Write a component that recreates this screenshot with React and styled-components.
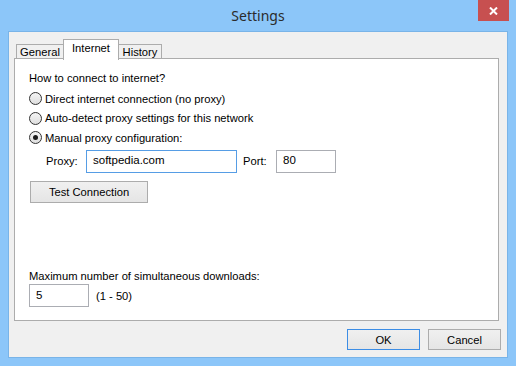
import React from "react"
import styled, { createGlobalStyle } from "styled-components"

const GlobalStyle = createGlobalStyle`
  html, body {
    margin: 0;
    padding: 0;
    background: #8cc6f9;
  }
  * {
    box-sizing: border-box;
  }
`

const Frame = styled.div`
  width: 516px;
  height: 366px;
  background: #8cc6f9;
  display: flex;
  flex-direction: column;
  font-family: "Liberation Sans", "Noto Sans", sans-serif;
  font-size: 11.2px;
  color: #000;
`

const TitleBar = styled.div`
  position: relative;
  height: 31px;
  display: flex;
  align-items: center;
  justify-content: center;
  padding-bottom: 1px;
`

const Title = styled.span`
  font-family: "Noto Sans", "Liberation Sans", sans-serif;
  font-size: 14px;
  color: #2b2b2b;
`

const CloseButton = styled.div`
  position: absolute;
  top: 0;
  right: 7px;
  width: 31px;
  height: 21px;
  background: #c75050;
  display: flex;
  align-items: center;
  justify-content: center;
`

const Client = styled.div`
  flex: 1;
  margin: 0 8px 8px;
  background: #f0f0f0;
  border: 1px solid #79b4e8;
  padding: 6px 6px 0 5px;
  display: flex;
  flex-direction: column;
`

const TabStrip = styled.div`
  display: flex;
  align-items: flex-end;
  height: 21px;
  padding-left: 2px;
  position: relative;
  z-index: 1;
`

const Tab = styled.div`
  width: ${p => p.$w}px;
  height: ${p => (p.$active ? "21px" : "15px")};
  padding-bottom: ${p => (p.$active ? "4px" : "0")};
  margin-left: ${p => (p.$first ? "0" : "-1px")};
  margin-bottom: ${p => (p.$active ? "-1px" : "0")};
  display: flex;
  align-items: center;
  justify-content: center;
  white-space: nowrap;
  background: ${p => (p.$active ? "#fff" : "#f0f0f0")};
  border: 1px solid #acacac;
  border-bottom: ${p => (p.$active ? "none" : "1px solid #acacac")};
  position: relative;
  z-index: ${p => (p.$active ? 2 : 1)};
`

const Panel = styled.div`
  height: 263px;
  margin: -1px 2px 0 0;
  background: #fff;
  border: 1px solid #acacac;
  padding: 11px 14px 0;
  display: flex;
  flex-direction: column;
`

const Label = styled.div`
  height: 16px;
  line-height: 16px;
  white-space: nowrap;
`

const Options = styled.div`
  margin-top: 3px;
  display: flex;
  flex-direction: column;
`

const RadioRow = styled.label`
  height: 19.5px;
  display: flex;
  align-items: center;
  gap: 3px;
  white-space: nowrap;
`

const RadioCircle = styled.span`
  width: 13px;
  height: 13px;
  border-radius: 50%;
  border: 1px solid #333;
  background: linear-gradient(#f4f4f4, #dedede);
  display: flex;
  align-items: center;
  justify-content: center;
  &::after {
    content: "";
    width: 5px;
    height: 5px;
    border-radius: 50%;
    background: ${p => (p.$checked ? "#1a1a1a" : "transparent")};
  }
`

const ProxyRow = styled.div`
  margin-top: 2px;
  padding-left: 17px;
  display: flex;
  align-items: center;
  height: 23px;
`

const FieldLabel = styled.span`
  width: ${p => p.$w}px;
  white-space: nowrap;
`

const TextBox = styled.div`
  width: ${p => p.$w}px;
  height: 23px;
  border: 1px solid ${p => (p.$focused ? "#569de5" : "#abadb3")};
  background: #fff;
  padding: 0 0 2px 6px;
  display: flex;
  align-items: center;
  margin-right: ${p => p.$mr || 0}px;
  font-size: 11.5px;
`

const Button = styled.div`
  width: ${p => p.$w}px;
  height: ${p => p.$h || 21}px;
  border: 1px solid ${p => (p.$default ? "#3c8de5" : "#acacac")};
  background: linear-gradient(#f0f0f0, #e5e5e5);
  display: flex;
  align-items: center;
  justify-content: center;
`

const TestRow = styled.div`
  margin-top: 8px;
  padding-left: 1px;
`

const Spacer = styled.div`
  flex: 1;
`

const LimitRow = styled.div`
  margin-bottom: 13px;
  display: flex;
  align-items: center;
`

const Footer = styled.div`
  display: flex;
  justify-content: flex-end;
  gap: 8px;
  padding-top: 8px;
`

export default function App() {
  return (
    <>
      <GlobalStyle />
      <Frame>
        <TitleBar>
          <Title>Settings</Title>
          <CloseButton>
            <svg width="9" height="8" viewBox="0 0 9 8">
              <path d="M1 0.5 L8 7.5 M8 0.5 L1 7.5" stroke="#fff" strokeWidth="2" />
            </svg>
          </CloseButton>
        </TitleBar>
        <Client>
          <TabStrip>
            <Tab $first $w={48}>General</Tab>
            <Tab $active $w={56}>Internet</Tab>
            <Tab $w={44}>History</Tab>
          </TabStrip>
          <Panel>
            <Label>How to connect to internet?</Label>
            <Options>
              <RadioRow>
                <RadioCircle />
                Direct internet connection (no proxy)
              </RadioRow>
              <RadioRow>
                <RadioCircle />
                Auto-detect proxy settings for this network
              </RadioRow>
              <RadioRow>
                <RadioCircle $checked />
                Manual proxy configuration:
              </RadioRow>
            </Options>
            <ProxyRow>
              <FieldLabel $w={40}>Proxy:</FieldLabel>
              <TextBox $w={151} $focused $mr={6}>softpedia.com</TextBox>
              <FieldLabel $w={33}>Port:</FieldLabel>
              <TextBox $w={60}>80</TextBox>
            </ProxyRow>
            <TestRow>
              <Button $w={118} $h={22}>Test Connection</Button>
            </TestRow>
            <Spacer />
            <Label>Maximum number of simultaneous downloads:</Label>
            <LimitRow>
              <TextBox $w={60} $mr={7}>5</TextBox>
              (1 - 50)
            </LimitRow>
          </Panel>
          <Footer>
            <Button $w={73} $default>OK</Button>
            <Button $w={73}>Cancel</Button>
          </Footer>
        </Client>
      </Frame>
    </>
  )
}
